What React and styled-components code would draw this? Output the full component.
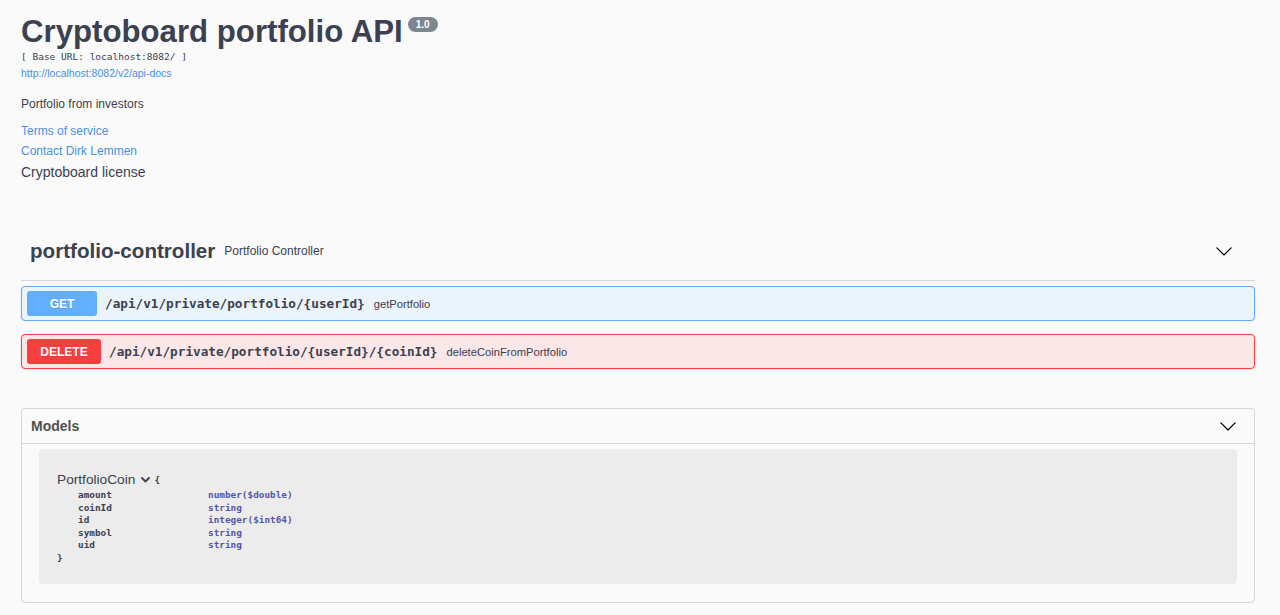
import React from "react";
import styled, { createGlobalStyle } from "styled-components";

const GlobalStyle = createGlobalStyle`
  html, body {
    margin: 0;
    padding: 0;
    background: #fafafa;
  }
  body {
    font-family: "Liberation Sans", Arial, sans-serif;
    color: #3b4151;
  }
`;

const Wrapper = styled.div`
  padding: 14px 25px 12px 21px;
`;

const Info = styled.div`
  display: flex;
  flex-direction: column;
  align-items: flex-start;
`;

const TitleRow = styled.div`
  display: flex;
  align-items: flex-start;
  gap: 5px;
`;

const Title = styled.h2`
  margin: 0;
  font-size: 31.2px;
  line-height: 36px;
  font-weight: 700;
  color: #3b4151;
`;

const Version = styled.span`
  margin-top: 3px;
  display: inline-flex;
  align-items: center;
  justify-content: center;
  height: 15px;
  padding: 0 8px;
  border-radius: 8px;
  background: #7d8492;
  color: #fff;
  font-size: 10px;
  font-weight: 700;
`;

const BaseUrl = styled.pre`
  margin: 1px 0 0;
  font-family: "DejaVu Sans Mono", "Liberation Mono", monospace;
  font-size: 9.5px;
  line-height: 12px;
  color: #3b4151;
`;

const Link = styled.a`
  color: #4990e2;
  text-decoration: none;
  font-size: ${(p) => p.size || "12px"};
  line-height: ${(p) => p.lh || "16px"};
  margin-top: ${(p) => p.mt || "0"};
`;

const Text = styled.div`
  font-size: ${(p) => p.size || "12px"};
  line-height: ${(p) => p.lh || "16px"};
  margin-top: ${(p) => p.mt || "0"};
  color: #3b4151;
`;

const TagSection = styled.div`
  margin-top: 41px;
`;

const TagHeader = styled.div`
  display: flex;
  align-items: center;
  height: 58px;
  padding: 0 22px 0 9px;
  border-bottom: 1px solid rgba(59, 65, 81, 0.2);
  margin-bottom: 5px;
`;

const TagName = styled.span`
  font-size: 20.6px;
  font-weight: 700;
  color: #3b4151;
`;

const TagDesc = styled.span`
  margin-left: 9px;
  font-size: 12px;
  flex: 1;
  color: #3b4151;
`;

const Opblock = styled.div`
  display: flex;
  align-items: center;
  height: 35px;
  box-sizing: border-box;
  padding: 0 5px;
  margin-bottom: 13px;
  border: 1px solid ${(p) => p.color};
  background: ${(p) => p.bg};
  border-radius: 4px;
  box-shadow: 0 0 2px rgba(0, 0, 0, 0.12);
`;

const Method = styled.span`
  display: inline-flex;
  align-items: center;
  justify-content: center;
  min-width: ${(p) => p.w};
  height: 25px;
  border-radius: 3px;
  background: ${(p) => p.color};
  color: #fff;
  font-size: 12px;
  font-weight: 700;
  text-shadow: 0 1px 0 rgba(0, 0, 0, 0.1);
`;

const Path = styled.span`
  margin-left: 8px;
  font-family: "DejaVu Sans Mono", "Liberation Mono", monospace;
  font-size: 12.7px;
  font-weight: 700;
  color: #3b4151;
`;

const Summary = styled.span`
  margin-left: 9px;
  font-size: 11.2px;
  color: #3b4151;
`;

const Models = styled.section`
  margin-top: 39px;
  border: 1px solid rgba(59, 65, 81, 0.2);
  border-radius: 4px;
`;

const ModelsHeader = styled.div`
  display: flex;
  align-items: center;
  justify-content: space-between;
  height: 34px;
  padding: 0 17px 0 9px;
  border-bottom: 1px solid rgba(59, 65, 81, 0.2);
`;

const ModelsTitle = styled.h4`
  margin: 0;
  font-size: 14px;
  font-weight: 700;
  color: #505050;
`;

const ModelBox = styled.div`
  margin: 5px 17px 18px;
  padding: 22px 18px 20px;
  background: #ececec;
  border-radius: 4px;
`;

const ModelTitleRow = styled.div`
  display: flex;
  align-items: center;
  height: 16px;
  margin-bottom: 2px;
`;

const ModelName = styled.span`
  font-size: 13.7px;
  color: #3b4151;
`;

const ModelToggle = styled.span`
  display: inline-flex;
  margin-left: 6px;
  margin-top: 2px;
`;

const Brace = styled.div`
  font-family: "DejaVu Sans Mono", "Liberation Mono", monospace;
  font-size: 9.4px;
  font-weight: 700;
  line-height: 12.5px;
  color: #3b4151;
  margin-left: ${(p) => p.ml || "0"};
  margin-top: ${(p) => p.mt || "0"};
`;

const PropRow = styled.div`
  display: grid;
  grid-template-columns: 130px auto;
  padding-left: 21px;
  font-family: "DejaVu Sans Mono", "Liberation Mono", monospace;
  font-size: 9.4px;
  font-weight: 700;
  line-height: 12.5px;
`;

const PropName = styled.span`
  color: #3b4151;
`;

const PropType = styled.span`
  color: #55a;
`;

const Chevron = ({ size = 18, color = "#000" }) => (
  <svg width={size} height={size} viewBox="0 0 20 20" fill={color}>
    <path d="M17.418 6.109c.272-.268.709-.268.979 0s.271.701 0 .969l-7.908 7.83c-.27.268-.707.268-.979 0l-7.908-7.83c-.27-.268-.27-.701 0-.969.271-.268.709-.268.979 0L10 13.25l7.418-7.141z" />
  </svg>
);

const SmallChevron = () => (
  <svg width="9" height="6" viewBox="0 0 9 6">
    <polyline
      points="1,1 4.5,4.5 8,1"
      fill="none"
      stroke="#3b4151"
      strokeWidth="1.8"
      strokeLinecap="round"
      strokeLinejoin="round"
    />
  </svg>
);

const props = [
  ["amount", "number($double)"],
  ["coinId", "string"],
  ["id", "integer($int64)"],
  ["symbol", "string"],
  ["uid", "string"],
];

export default function App() {
  return (
    <>
      <GlobalStyle />
      <Wrapper>
        <Info>
          <TitleRow>
            <Title>Cryptoboard portfolio API</Title>
            <Version>1.0</Version>
          </TitleRow>
          <BaseUrl>[ Base URL: localhost:8082/ ]</BaseUrl>
          <Link size="10.5px" lh="12px" mt="4px" href="#">
            http://localhost:8082/v2/api-docs
          </Link>
          <Text mt="17px">Portfolio from investors</Text>
          <Link mt="11px" href="#">Terms of service</Link>
          <Link mt="4px" href="#">Contact Dirk Lemmen</Link>
          <Text size="14px" lh="18px" mt="4px">Cryptoboard license</Text>
        </Info>

        <TagSection>
          <TagHeader>
            <TagName>portfolio-controller</TagName>
            <TagDesc>Portfolio Controller</TagDesc>
            <Chevron />
          </TagHeader>
          <Opblock color="#61affe" bg="#ebf3fb">
            <Method color="#61affe" w="70px">GET</Method>
            <Path>/api/v1/private/portfolio/{"{userId}"}</Path>
            <Summary>getPortfolio</Summary>
          </Opblock>
          <Opblock color="#f93e3e" bg="#fbe7e7">
            <Method color="#f93e3e" w="74px">DELETE</Method>
            <Path>/api/v1/private/portfolio/{"{userId}"}/{"{coinId}"}</Path>
            <Summary>deleteCoinFromPortfolio</Summary>
          </Opblock>
        </TagSection>

        <Models>
          <ModelsHeader>
            <ModelsTitle>Models</ModelsTitle>
            <Chevron />
          </ModelsHeader>
          <ModelBox>
            <ModelTitleRow>
              <ModelName>PortfolioCoin</ModelName>
              <ModelToggle>
                <SmallChevron />
              </ModelToggle>
              <Brace ml="4px" mt="2px">{"{"}</Brace>
            </ModelTitleRow>
            {props.map(([n, t]) => (
              <PropRow key={n}>
                <PropName>{n}</PropName>
                <PropType>{t}</PropType>
              </PropRow>
            ))}
            <Brace>{"}"}</Brace>
          </ModelBox>
        </Models>
      </Wrapper>
    </>
  );
}
